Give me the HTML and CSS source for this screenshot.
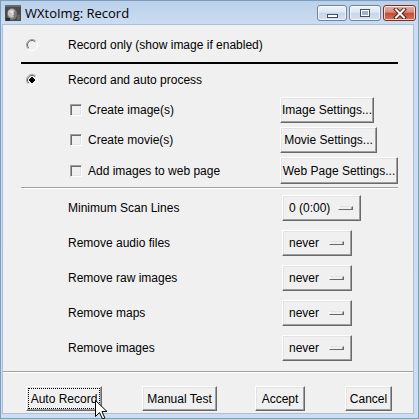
FILE: index.html
```html
<!DOCTYPE html>
<html>
<head>
<meta charset="utf-8">
<title>WXtoImg: Record</title>
<link rel="stylesheet" href="styles.css">
</head>
<body>
<div class="window">
  <div class="titlebar">
    <svg class="appicon" width="16" height="16" viewBox="0 0 16 16">
      <rect width="16" height="16" fill="#4a4a4a"/>
      <rect x="0" y="0" width="16" height="2" fill="#6a6a6a"/>
      <ellipse cx="7" cy="9" rx="5" ry="6" fill="#7a7a7a"/>
      <path d="M3 6 Q7 2 10 6 Q7 8 9 12 Q5 14 3 10 Z" fill="#c4c4c4"/>
      <path d="M5 7 Q8 5 8 10" stroke="#f2f2f2" stroke-width="1.2" fill="none"/>
      <rect x="12" y="10" width="3" height="5" fill="#626262"/>
      <rect x="1" y="13" width="4" height="3" fill="#2e2e2e"/>
    </svg>
    <span class="title">WXtoImg: Record</span>
    <div class="caption">
      <div class="cbtn min"><i></i></div>
      <div class="cbtn max"><i></i></div>
      <div class="cbtn close">
        <svg width="14" height="11" viewBox="0 0 14 11">
          <path d="M3 1.5 L11 9.5 M11 1.5 L3 9.5" stroke="#5a2217" stroke-width="4" stroke-linecap="square"/>
          <path d="M3 1.5 L11 9.5 M11 1.5 L3 9.5" stroke="#ffffff" stroke-width="2" stroke-linecap="square"/>
        </svg>
      </div>
    </div>
  </div>

  <div class="client">
    <div class="section">
      <div class="radio-row first">
        <svg class="radio" width="12" height="12" viewBox="0 0 12 12">
          <path d="M2.1 9.9 A5.5 5.5 0 0 1 9.9 2.1" stroke="#a0a0a0" fill="none"/>
          <path d="M2.8 9.2 A4.5 4.5 0 0 1 9.2 2.8" stroke="#696969" fill="none"/>
          <path d="M9.9 2.1 A5.5 5.5 0 0 1 2.1 9.9" stroke="#ffffff" fill="none"/>
        </svg>
        <span>Record only (show image if enabled)</span>
      </div>
      <div class="rule-black"></div>
      <div class="radio-row second">
        <svg class="radio" width="12" height="12" viewBox="0 0 12 12">
          <path d="M2.1 9.9 A5.5 5.5 0 0 1 9.9 2.1" stroke="#a0a0a0" fill="none"/>
          <path d="M2.8 9.2 A4.5 4.5 0 0 1 9.2 2.8" stroke="#696969" fill="none"/>
          <path d="M9.9 2.1 A5.5 5.5 0 0 1 2.1 9.9" stroke="#ffffff" fill="none"/>
          <rect x="4" y="4" width="4" height="4" fill="#000"/>
          <rect x="5" y="3" width="2" height="6" fill="#000"/>
          <rect x="3" y="5" width="6" height="2" fill="#000"/>
        </svg>
        <span>Record and auto process</span>
      </div>

      <div class="chk-row first">
        <div class="chk-label"><span class="checkbox"></span><span>Create image(s)</span></div>
        <div class="btn w-image">Image Settings...</div>
      </div>
      <div class="chk-row">
        <div class="chk-label"><span class="checkbox"></span><span>Create movie(s)</span></div>
        <div class="btn w-movie">Movie Settings...</div>
      </div>
      <div class="chk-row">
        <div class="chk-label"><span class="checkbox"></span><span>Add images to web page</span></div>
        <div class="btn w-web">Web Page Settings...</div>
      </div>

      <div class="rule-gray"></div>

      <div class="menu-row first">
        <span class="menu-label">Minimum Scan Lines</span>
        <div class="btn mbtn w-scan"><span>0 (0:00)</span><span class="ind"></span></div>
      </div>
      <div class="menu-row">
        <span class="menu-label">Remove audio files</span>
        <div class="btn mbtn w-never"><span>never</span><span class="ind"></span></div>
      </div>
      <div class="menu-row">
        <span class="menu-label">Remove raw images</span>
        <div class="btn mbtn w-never"><span>never</span><span class="ind"></span></div>
      </div>
      <div class="menu-row">
        <span class="menu-label">Remove maps</span>
        <div class="btn mbtn w-never"><span>never</span><span class="ind"></span></div>
      </div>
      <div class="menu-row">
        <span class="menu-label">Remove images</span>
        <div class="btn mbtn w-never"><span>never</span><span class="ind"></span></div>
      </div>
    </div>

    <div class="bottom-rule"></div>
    <div class="bottom-btns">
      <div class="btn b-auto focus">Auto Record</div>
      <div class="btn b-manual">Manual Test</div>
      <div class="btn b-accept">Accept</div>
      <div class="btn b-cancel">Cancel</div>
    </div>
  </div>

  <svg class="cursor" width="13" height="20" viewBox="0 0 13 20">
    <path d="M0.5 0.5 L0.5 16.5 L4.5 12.5 L7.5 19 L9.8 18 L7 11.5 L12 11.5 Z" fill="#fff" stroke="#000" stroke-width="1" stroke-linejoin="miter"/>
  </svg>
</div>
</body>
</html>
```
FILE: styles.css
```css
* { box-sizing: border-box; }
html, body { margin: 0; padding: 0; }
body {
  width: 419px;
  height: 419px;
  overflow: hidden;
  font-family: "Liberation Sans", Arial, sans-serif;
  font-size: 12px;
  color: #000;
  background: #cddef1;
}

.window {
  position: relative;
  width: 419px;
  height: 419px;
  display: flex;
  flex-direction: column;
  background: linear-gradient(to bottom, #b9d0ea 0, #cbdcf0 24px, #cddef1 100%);
  box-shadow: inset 0 0 0 1px #7e9cc0;
}

/* title bar */
.titlebar {
  height: 25px;
  display: flex;
  align-items: center;
  flex: none;
}
.appicon { margin-left: 5px; margin-top: 1px; flex: none; }
.title {
  margin-left: 4px;
  font-family: "Open Sans", "Noto Sans", sans-serif;
  font-size: 13px;
  color: #000;
  margin-top: 1px;
}
.caption {
  margin-left: auto;
  margin-right: 3px;
  display: flex;
  gap: 2px;
  align-self: flex-start;
  margin-top: 5px;
}
.cbtn {
  height: 16px;
  border: 1px solid #6f83a0;
  border-radius: 3px;
  background: linear-gradient(to bottom, #eef3fa 0, #dbe6f3 45%, #c6d6ea 50%, #d3e0f0 100%);
  box-shadow: inset 0 0 0 1px rgba(255,255,255,0.7);
  display: flex;
  align-items: center;
  justify-content: center;
}
.min { width: 30px; }
.min i {
  display: block;
  width: 11px;
  height: 4px;
  margin-top: 5px;
  border: 1px solid #3f4f68;
  background: #fff;
}
.max { width: 32px; }
.max i {
  display: block;
  width: 10px;
  height: 8px;
  border: 1px solid #3f4f68;
  background: #9fb2cc;
  box-shadow: inset 0 0 0 1px #fff;
}
.close {
  width: 33px;
  border-color: #7f2f22;
  background: linear-gradient(to bottom, #eab0a2 0, #d9897a 45%, #c54a31 50%, #d27460 100%);
}

/* client area */
.client {
  margin: 0 6px 6px 3px;
  height: 388px;
  background: #f0f0f0;
  display: flex;
  flex-direction: column;
  box-shadow: 0 0 0 1px #a9bfda;
}
.section {
  margin-left: 18px;
  width: 377px;
  display: flex;
  flex-direction: column;
}

.radio-row {
  height: 24px;
  display: flex;
  align-items: center;
}
.radio-row.first { margin-top: 8px; }
.radio-row.second { margin-top: 4px; }
.radio { flex: none; margin-left: 5px; margin-right: 30px; }

.rule-black {
  height: 2px;
  background: #000;
  margin-top: 5px;
}

.chk-row {
  display: grid;
  grid-template-columns: 259px auto;
  align-items: center;
  height: 26px;
  margin-top: 4px;
}
.chk-row.first { margin-top: 5px; }
.chk-label {
  display: flex;
  align-items: center;
  padding-left: 49px;
}
.checkbox {
  flex: none;
  width: 12px;
  height: 12px;
  margin-right: 6px;
  border: 1px solid;
  border-color: #a0a0a0 #ffffff #ffffff #a0a0a0;
  box-shadow: inset 1px 1px #696969, inset -1px -1px #e3e3e3;
}

.rule-gray {
  height: 2px;
  border-top: 1px solid #a0a0a0;
  border-bottom: 1px solid #ffffff;
  margin-top: 4px;
}

.menu-row {
  display: grid;
  grid-template-columns: 261px auto;
  align-items: center;
  height: 26px;
  margin-top: 9px;
}
.menu-row.first { margin-top: 6px; }
.menu-label { padding-left: 47px; }

/* Tk style buttons */
.btn {
  height: 26px;
  border: 1px solid;
  border-color: #ffffff #696969 #696969 #ffffff;
  box-shadow: inset -1px -1px #a0a0a0, inset 1px 1px #e3e3e3;
  background: #f0f0f0;
  display: flex;
  align-items: center;
  justify-content: center;
  white-space: nowrap;
}
.w-image { width: 94px; }
.w-movie { width: 97px; }
.w-web { width: 118px; height: 27px; }

.mbtn {
  justify-content: space-between;
  padding: 0 7px 0 6px;
}
.w-scan { width: 79px; }
.w-never { width: 70px; }
.ind {
  width: 15px;
  height: 4px;
  border: 1px solid;
  border-color: #e3e3e3 #696969 #696969 #ffffff;
  box-shadow: inset -1px 0 #a0a0a0;
}

.bottom-rule {
  height: 2px;
  border-top: 1px solid #a0a0a0;
  border-bottom: 1px solid #ffffff;
  margin-top: 10px;
}
.bottom-btns {
  display: flex;
  height: 25px;
  margin-top: 13px;
}
.bottom-btns .btn { height: 25px; }
.b-auto { width: 76px; margin-left: 23px; }
.b-manual { width: 75px; margin-left: 40px; }
.b-accept { width: 50px; margin-left: 38px; }
.b-cancel { width: 47px; margin-left: 40px; }
.focus {
  outline: 1px dotted #000;
  outline-offset: -3px;
}

.cursor {
  position: absolute;
  left: 95px;
  top: 400px;
}
```
